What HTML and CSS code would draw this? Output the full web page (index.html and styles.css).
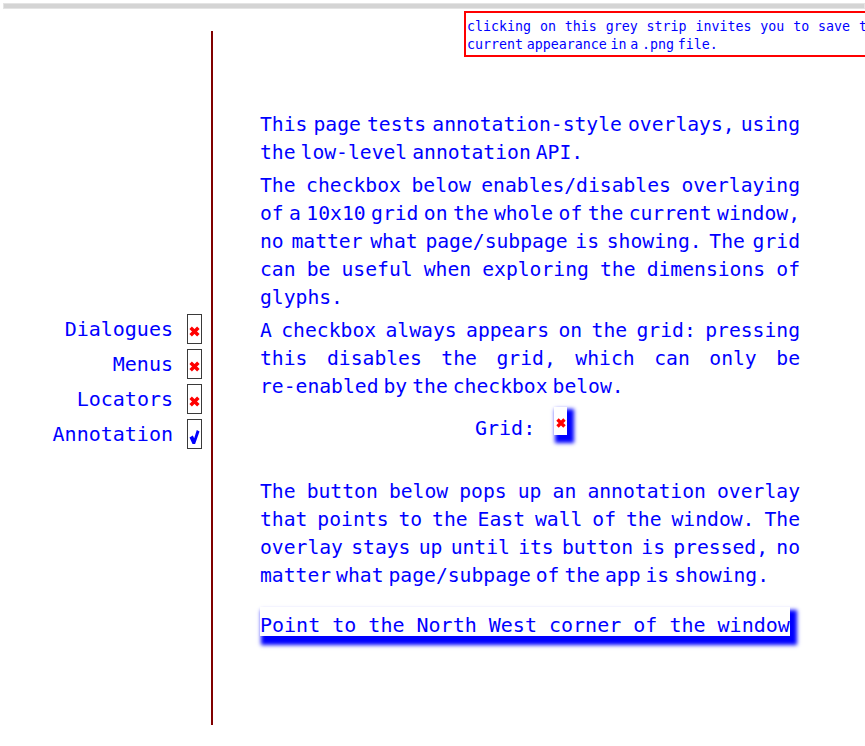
FILE: index.html
```html
<!DOCTYPE html>
<html lang="en">
<head>
<meta charset="utf-8">
<title>Annotation overlays</title>
<link rel="stylesheet" href="styles.css">
</head>
<body>
<div class="strip"></div>
<div class="hint">clicking on this grey strip invites you to save the current appearance in a .png file.</div>
<div class="app">
  <nav class="side">
    <div class="nav-item"><span class="nav-label">Dialogues</span><span class="box"><svg viewBox="0 0 10 10" width="11" height="11"><path d="M1.5 1.5L8.5 8.5M8.5 1.5L1.5 8.5" stroke="#ff0000" stroke-width="3.2"/></svg></span></div>
    <div class="nav-item"><span class="nav-label">Menus</span><span class="box"><svg viewBox="0 0 10 10" width="11" height="11"><path d="M1.5 1.5L8.5 8.5M8.5 1.5L1.5 8.5" stroke="#ff0000" stroke-width="3.2"/></svg></span></div>
    <div class="nav-item"><span class="nav-label">Locators</span><span class="box"><svg viewBox="0 0 10 10" width="11" height="11"><path d="M1.5 1.5L8.5 8.5M8.5 1.5L1.5 8.5" stroke="#ff0000" stroke-width="3.2"/></svg></span></div>
    <div class="nav-item"><span class="nav-label">Annotation</span><span class="box box-checked"><svg viewBox="0 0 10 14" width="11" height="14"><path d="M0 7.4L3.3 5.6L4.7 8.2L7.3 0L10 1.4L5.6 14L3 14Z" fill="#0000ff"/></svg></span></div>
  </nav>
  <main class="content">
    <p>This page tests annotation-style overlays, using the low-level annotation API.</p>
    <p>The checkbox below enables/disables overlaying of a 10x10 grid on the whole of the current window, no matter what page/subpage is showing. The grid can be useful when exploring the dimensions of glyphs.</p>
    <p>A checkbox always appears on the grid: pressing this disables the grid, which can only be <span class="nobr">re-enabled</span> by the checkbox below.</p>
    <div class="grid-row">
      <span class="grid-label">Grid:</span>
      <span class="toggle"><svg viewBox="0 0 10 10" width="10" height="10"><path d="M1.5 1.5L8.5 8.5M8.5 1.5L1.5 8.5" stroke="#ff0000" stroke-width="3.4"/></svg></span>
    </div>
    <p>The button below pops up an annotation overlay that points to the East wall of the window. The overlay stays up until its button is pressed, no matter what page/subpage of the app is showing.</p>
    <button class="point-btn" type="button">Point to the North West corner of the window</button>
  </main>
</div>
</body>
</html>
```

FILE: styles.css
```css
html {
  overflow: hidden;
}

body {
  margin: 0;
  background: #ffffff;
  color: #0000ff;
  font-family: "DejaVu Sans Mono", "Liberation Mono", monospace;
}

.strip {
  margin: 3px 0 0 3px;
  height: 6px;
  box-sizing: border-box;
  background: #d4d4d4;
  border: 1px solid #e4e4e4;
}

.hint {
  position: absolute;
  left: 464px;
  top: 11px;
  width: 416px;
  padding: 5px 0 1px 1px;
  border: 2px solid #ff0000;
  background: #ffffff;
  font-size: 13.3px;
  line-height: 18px;
  text-align: justify;
  word-spacing: -4.3px;
}

.app {
  display: flex;
  margin-top: 22px;
  height: 694px;
}

.side {
  width: 213px;
  flex: none;
  box-sizing: border-box;
  border-right: 2px solid #800000;
  padding: 6px 9px 0 0;
  display: flex;
  flex-direction: column;
  justify-content: center;
  align-items: flex-end;
  gap: 5px;
}

.nav-item {
  display: flex;
  align-items: center;
  gap: 14px;
  height: 30px;
  font-size: 20px;
  line-height: 30px;
}

.box {
  width: 15px;
  height: 30px;
  box-sizing: border-box;
  border: 1px solid #3a3a3a;
  background: #ffffff;
  display: flex;
  justify-content: center;
  align-items: center;
  padding-top: 6px;
}

.box-checked {
  align-items: flex-end;
  padding: 0 0 4px;
}

.box svg {
  display: block;
  flex: none;
}

.content {
  flex: 1;
  padding: 80px 0 0 47px;
}

.content p {
  width: 540px;
  margin: 0 0 5px;
  font-size: 19.7px;
  line-height: 28px;
  text-align: justify;
  word-spacing: -6.87px;
}

.nobr {
  white-space: nowrap;
}

.grid-row {
  display: flex;
  align-items: flex-start;
  gap: 19px;
  margin: 6px 0 36px;
  padding-left: 215px;
}

.grid-label {
  margin-top: 7px;
  font-size: 20px;
  line-height: 28px;
}

.toggle {
  width: 13px;
  height: 28px;
  background: #ffffff;
  box-shadow: 4px 5px 4px 3px #0000ff;
  display: flex;
  justify-content: center;
  align-items: flex-start;
  padding-top: 11px;
  box-sizing: border-box;
}

.toggle svg {
  display: block;
  flex: none;
}

.point-btn {
  display: block;
  margin: 17px 0 0;
  padding: 8px 0 0;
  border: 0;
  height: 29px;
  box-sizing: border-box;
  background: #ffffff;
  color: #0000ff;
  font-family: "DejaVu Sans Mono", "Liberation Mono", monospace;
  font-size: 20px;
  line-height: 21px;
  box-shadow: 4px 6px 4px 3px #0000ff;
  cursor: pointer;
}
```
